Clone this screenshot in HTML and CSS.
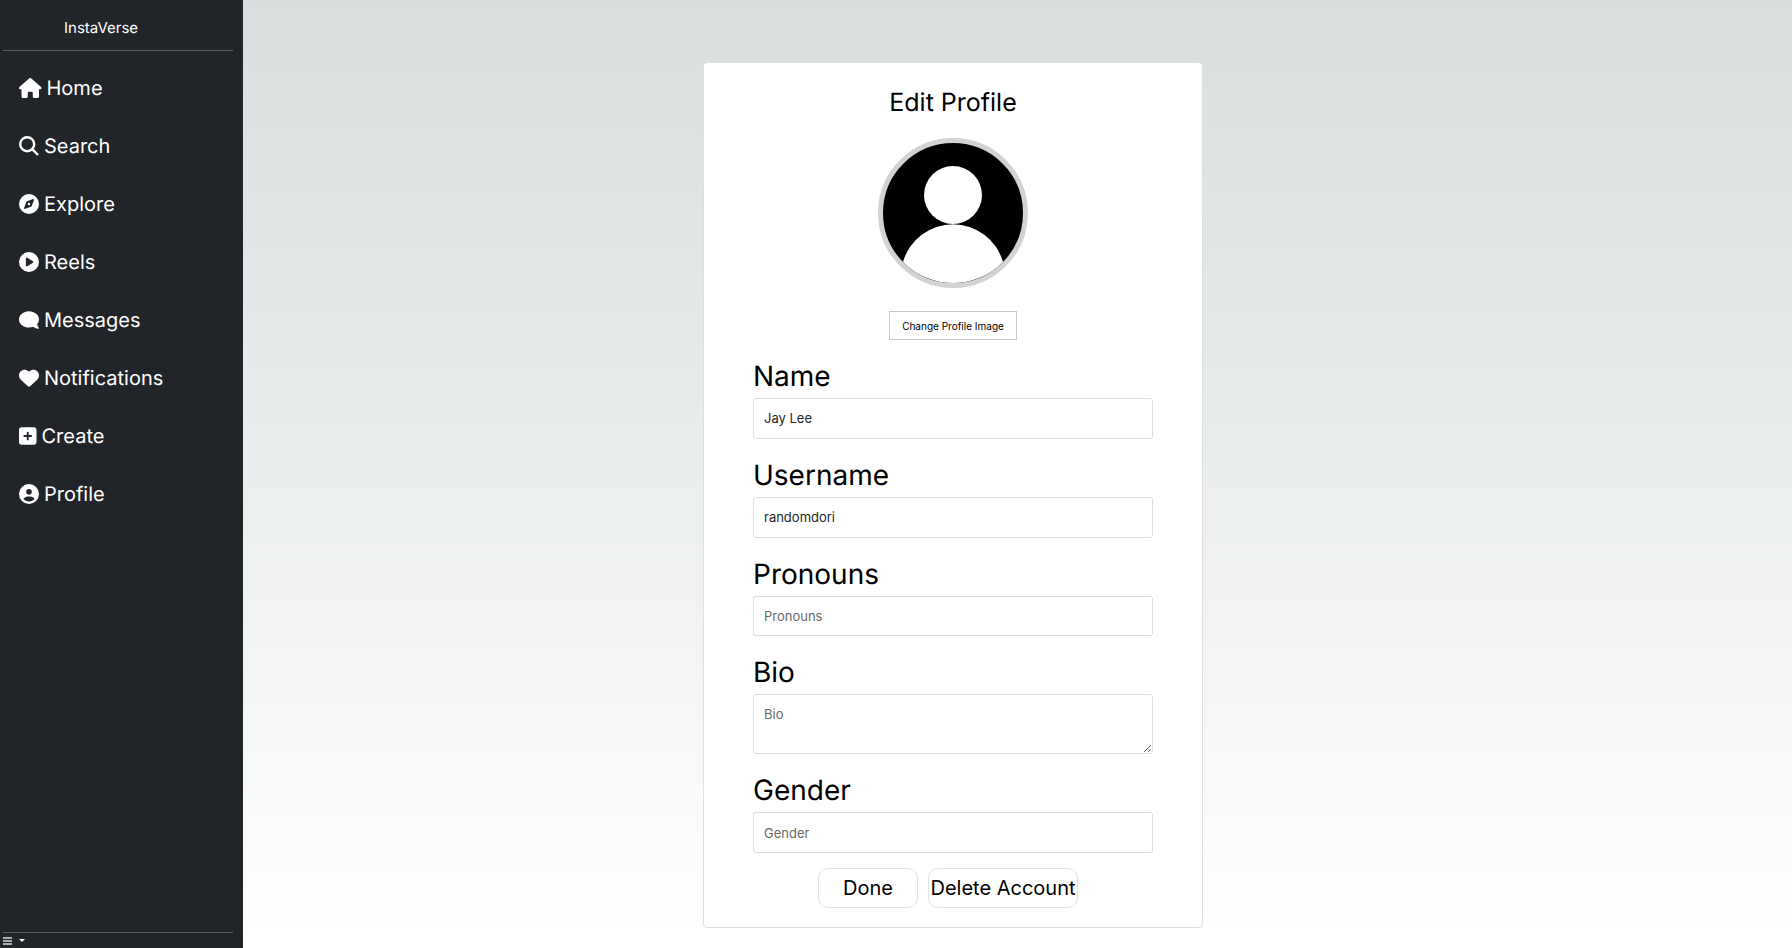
FILE: index.html
```html
<!DOCTYPE html>
<html lang="en">
<head>
<meta charset="utf-8">
<title>InstaVerse - Edit Profile</title>
<link rel="stylesheet" href="styles.css">
</head>
<body>
<div class="app">
  <aside class="sidebar">
    <div class="brand">InstaVerse</div>
    <hr class="rule">
    <nav class="nav">
      <a class="nav-item"><svg class="icon icon-wide" viewBox="0 0 576 512"><path d="M575.8 255.5c0 18-15 32.1-32 32.1h-32l.7 160.2c0 2.7-.2 5.4-.5 8.1V472c0 22.1-17.9 40-40 40H456c-1.1 0-2.2 0-3.3-.1c-1.4 .1-2.8 .1-4.2 .1H416 392c-22.1 0-40-17.9-40-40V448 384c0-17.7-14.3-32-32-32H256c-17.7 0-32 14.3-32 32v64 24c0 22.1-17.9 40-40 40H160 128.1c-1.5 0-3-.1-4.5-.2c-1.2 .1-2.4 .2-3.6 .2H104c-22.1 0-40-17.9-40-40V360c0-.9 0-1.9 .1-2.8V287.6H32c-18 0-32-14-32-32.1c0-9 3-17 10-24L266.4 8c7-7 15-8 22-8s15 2 21 7L564.8 231.5c8 7 12 15 11 24z"/></svg><span>Home</span></a>
      <a class="nav-item"><svg class="icon icon-search" viewBox="0 0 20 20"><circle cx="8.2" cy="8.2" r="7"/><path d="M13.2 13.2L19 19"/></svg><span>Search</span></a>
      <a class="nav-item"><svg class="icon" viewBox="0 0 512 512"><path d="M256 512A256 256 0 1 0 256 0a256 256 0 1 0 0 512zm50.7-186.9L162.4 380.6c-19.4 7.5-38.5-11.6-31-31l55.5-144.3c3.3-8.5 9.9-15.1 18.4-18.4l144.3-55.5c19.4-7.5 38.5 11.6 31 31L325.1 306.7c-3.2 8.5-9.9 15.1-18.4 18.4zM288 256a32 32 0 1 0 -64 0 32 32 0 1 0 64 0z"/></svg><span>Explore</span></a>
      <a class="nav-item"><svg class="icon" viewBox="0 0 512 512"><path d="M0 256a256 256 0 1 1 512 0A256 256 0 1 1 0 256zM188.3 147.1c-7.6 4.2-12.3 12.3-12.3 20.9V344c0 8.7 4.7 16.7 12.3 20.9s16.8 4.1 24.3-.5l144-88c7.1-4.4 11.5-12.1 11.5-20.5s-4.4-16.1-11.5-20.5l-144-88c-7.4-4.5-16.7-4.7-24.3-.5z"/></svg><span>Reels</span></a>
      <a class="nav-item"><svg class="icon" viewBox="0 0 512 512"><path transform="matrix(-1 0 0 1 512 0)" d="M512 240c0 114.9-114.6 208-256 208c-37.1 0-72.3-6.4-104.1-17.9c-11.9 8.7-31.3 20.6-54.3 30.6C73.6 471.1 44.7 480 16 480c-6.5 0-12.3-3.9-14.8-9.9c-2.5-6-1.1-12.8 3.4-17.4l.3-.3c.3-.3 .7-.7 1.3-1.4c1.1-1.2 2.8-3.1 4.9-5.7c4.1-5 9.6-12.4 15.2-21.6c10-16.6 19.5-38.4 21.4-62.9C17.7 326.8 0 285.1 0 240C0 125.1 114.6 32 256 32s256 93.1 256 208z"/></svg><span>Messages</span></a>
      <a class="nav-item"><svg class="icon" viewBox="0 0 512 512"><path d="M47.6 300.4L228.3 469.1c7.5 7 17.4 10.9 27.7 10.9s20.2-3.9 27.7-10.9L464.4 300.4c30.4-28.3 47.6-68 47.6-109.5v-5.8c0-69.9-50.5-129.5-119.4-141C347 36.5 300.6 51.4 268 84L256 96 244 84c-32.6-32.6-79-47.5-124.6-39.9C50.5 55.6 0 115.2 0 185.1v5.8c0 41.5 17.2 81.2 47.6 109.5z"/></svg><span>Notifications</span></a>
      <a class="nav-item"><svg class="icon icon-narrow" viewBox="0 0 448 512"><path d="M64 32C28.7 32 0 60.7 0 96V416c0 35.3 28.7 64 64 64H384c35.3 0 64-28.7 64-64V96c0-35.3-28.7-64-64-64H64zM200 344V280H136c-13.3 0-24-10.7-24-24s10.7-24 24-24h64V168c0-13.3 10.7-24 24-24s24 10.7 24 24v64h64c13.3 0 24 10.7 24 24s-10.7 24-24 24H248v64c0 13.3-10.7 24-24 24s-24-10.7-24-24z"/></svg><span>Create</span></a>
      <a class="nav-item"><svg class="icon" viewBox="0 0 512 512"><path d="M399 384.2C376.9 345.8 335.4 320 288 320H224c-47.4 0-88.9 25.8-111 64.2c35.2 39.2 86.2 63.8 143 63.8s107.8-24.7 143-63.8zM0 256a256 256 0 1 1 512 0A256 256 0 1 1 0 256zm256 16a72 72 0 1 0 0-144 72 72 0 1 0 0 144z"/></svg><span>Profile</span></a>
    </nav>
    <hr class="rule rule-bottom">
    <div class="toggle">
      <span class="bars"><i></i><i></i><i></i></span>
      <span class="caret"></span>
    </div>
  </aside>
  <main class="main">
    <section class="card">
      <h1 class="title">Edit Profile</h1>
      <svg class="avatar" viewBox="0 0 150 150">
        <circle cx="75" cy="75" r="71" fill="#000"/>
        <circle cx="75" cy="57" r="29" fill="#fff"/>
        <path d="M25 124A52 52 0 0 1 125 124A70 70 0 0 1 25 124Z" fill="#fff"/>
        <circle cx="75" cy="75" r="72.5" fill="none" stroke="#d3d3d3" stroke-width="5"/>
      </svg>
      <button class="change-btn" type="button">Change Profile Image</button>
      <form class="form">
        <label class="label" for="name">Name</label>
        <input class="field" id="name" type="text" value="Jay Lee" placeholder="Name">
        <label class="label" for="username">Username</label>
        <input class="field" id="username" type="text" value="randomdori" placeholder="Username">
        <label class="label" for="pronouns">Pronouns</label>
        <input class="field" id="pronouns" type="text" placeholder="Pronouns">
        <label class="label" for="bio">Bio</label>
        <textarea class="field area" id="bio" placeholder="Bio"></textarea>
        <label class="label" for="gender">Gender</label>
        <input class="field" id="gender" type="text" placeholder="Gender">
        <div class="actions">
          <button class="action done" type="button">Done</button>
          <button class="action delete" type="button">Delete Account</button>
        </div>
      </form>
    </section>
  </main>
</div>
</body>
</html>
```
FILE: styles.css
```css
* { box-sizing: border-box; }
html, body { height: 100%; }
body {
  margin: 0;
  font-family: Inter, "Liberation Sans", sans-serif;
  color: #000;
  overflow: hidden;
  text-rendering: geometricPrecision;
}
.app { display: flex; height: 948px; }
.sidebar {
  flex: 0 0 243px;
  display: flex;
  flex-direction: column;
  background: #212529;
  color: #fff;
  padding: 0 10px 0 3px;
}
.brand {
  height: 50px;
  padding: 17px 0 0 61px;
  font-size: 15px;
  line-height: 22px;
}
.rule {
  margin: 0;
  border: 0;
  border-top: 1px solid #5b5f63;
  flex: none;
}
.nav {
  flex: 1;
  display: flex;
  flex-direction: column;
  padding: 8px 0 0 16px;
}
.nav-item {
  height: 58px;
  display: flex;
  align-items: center;
  gap: 5px;
  font-size: 20px;
  line-height: 30px;
  color: #fff;
}
.icon { width: 20px; height: 20px; fill: #fff; flex: none; }
.icon-wide { width: 22.5px; }
.icon-narrow { width: 17.5px; }
.icon-search { fill: none; stroke: #fff; stroke-width: 2.4; }
.toggle {
  height: 15px;
  display: flex;
  align-items: center;
  gap: 7px;
}
.bars { display: flex; flex-direction: column; gap: 1px; width: 9px; }
.bars i { display: block; height: 2px; background: #a9abad; }
.caret {
  width: 0;
  height: 0;
  border-left: 3px solid transparent;
  border-right: 3px solid transparent;
  border-top: 3px solid #fff;
}
.main {
  flex: 1;
  background: linear-gradient(to bottom, #d8dddd, #ffffff);
  padding: 62px 0 0 460px;
}
.card {
  width: 500px;
  height: 866px;
  background: #fff;
  border: 1px solid #dfdfdf;
  border-radius: 4px;
  padding: 22px 49px 0;
  display: flex;
  flex-direction: column;
  align-items: center;
}
.title {
  margin: 0 0 16px;
  font-size: 25px;
  line-height: 37px;
  font-weight: 400;
}
.avatar {
  width: 150px;
  height: 150px;
  flex: none;
}
.change-btn {
  margin: 23px 0 16px;
  width: 128px;
  height: 29px;
  padding: 0;
  background: #fff;
  border: 1px solid #c8c8c8;
  font: 400 10px Inter, sans-serif;
  color: #000;
}
.form { width: 400px; display: flex; flex-direction: column; }
.label {
  font-size: 28px;
  line-height: 41px;
  height: 42px;
}
.field {
  display: block;
  width: 100%;
  height: 40.75px;
  margin-bottom: 16px;
  padding: 0 10px;
  background: #fff;
  border: 1px solid #dcdcdc;
  border-radius: 3px;
  font: 400 13px Inter, sans-serif;
  color: #212529;
  outline: none;
}
.field::placeholder { color: #6a6a6a; opacity: 1; }
.area { height: 60px; padding: 11px 10px; }
.actions {
  display: flex;
  justify-content: center;
  gap: 10px;
  margin-top: -1px;
  padding-right: 10px;
}
.action {
  height: 40px;
  padding: 0;
  background: #fff;
  border: 1px solid #e2e2e2;
  border-radius: 10px;
  font: 400 20px Inter, sans-serif;
  color: #000;
}
.done { width: 100px; }
.delete { width: 150px; }
```
